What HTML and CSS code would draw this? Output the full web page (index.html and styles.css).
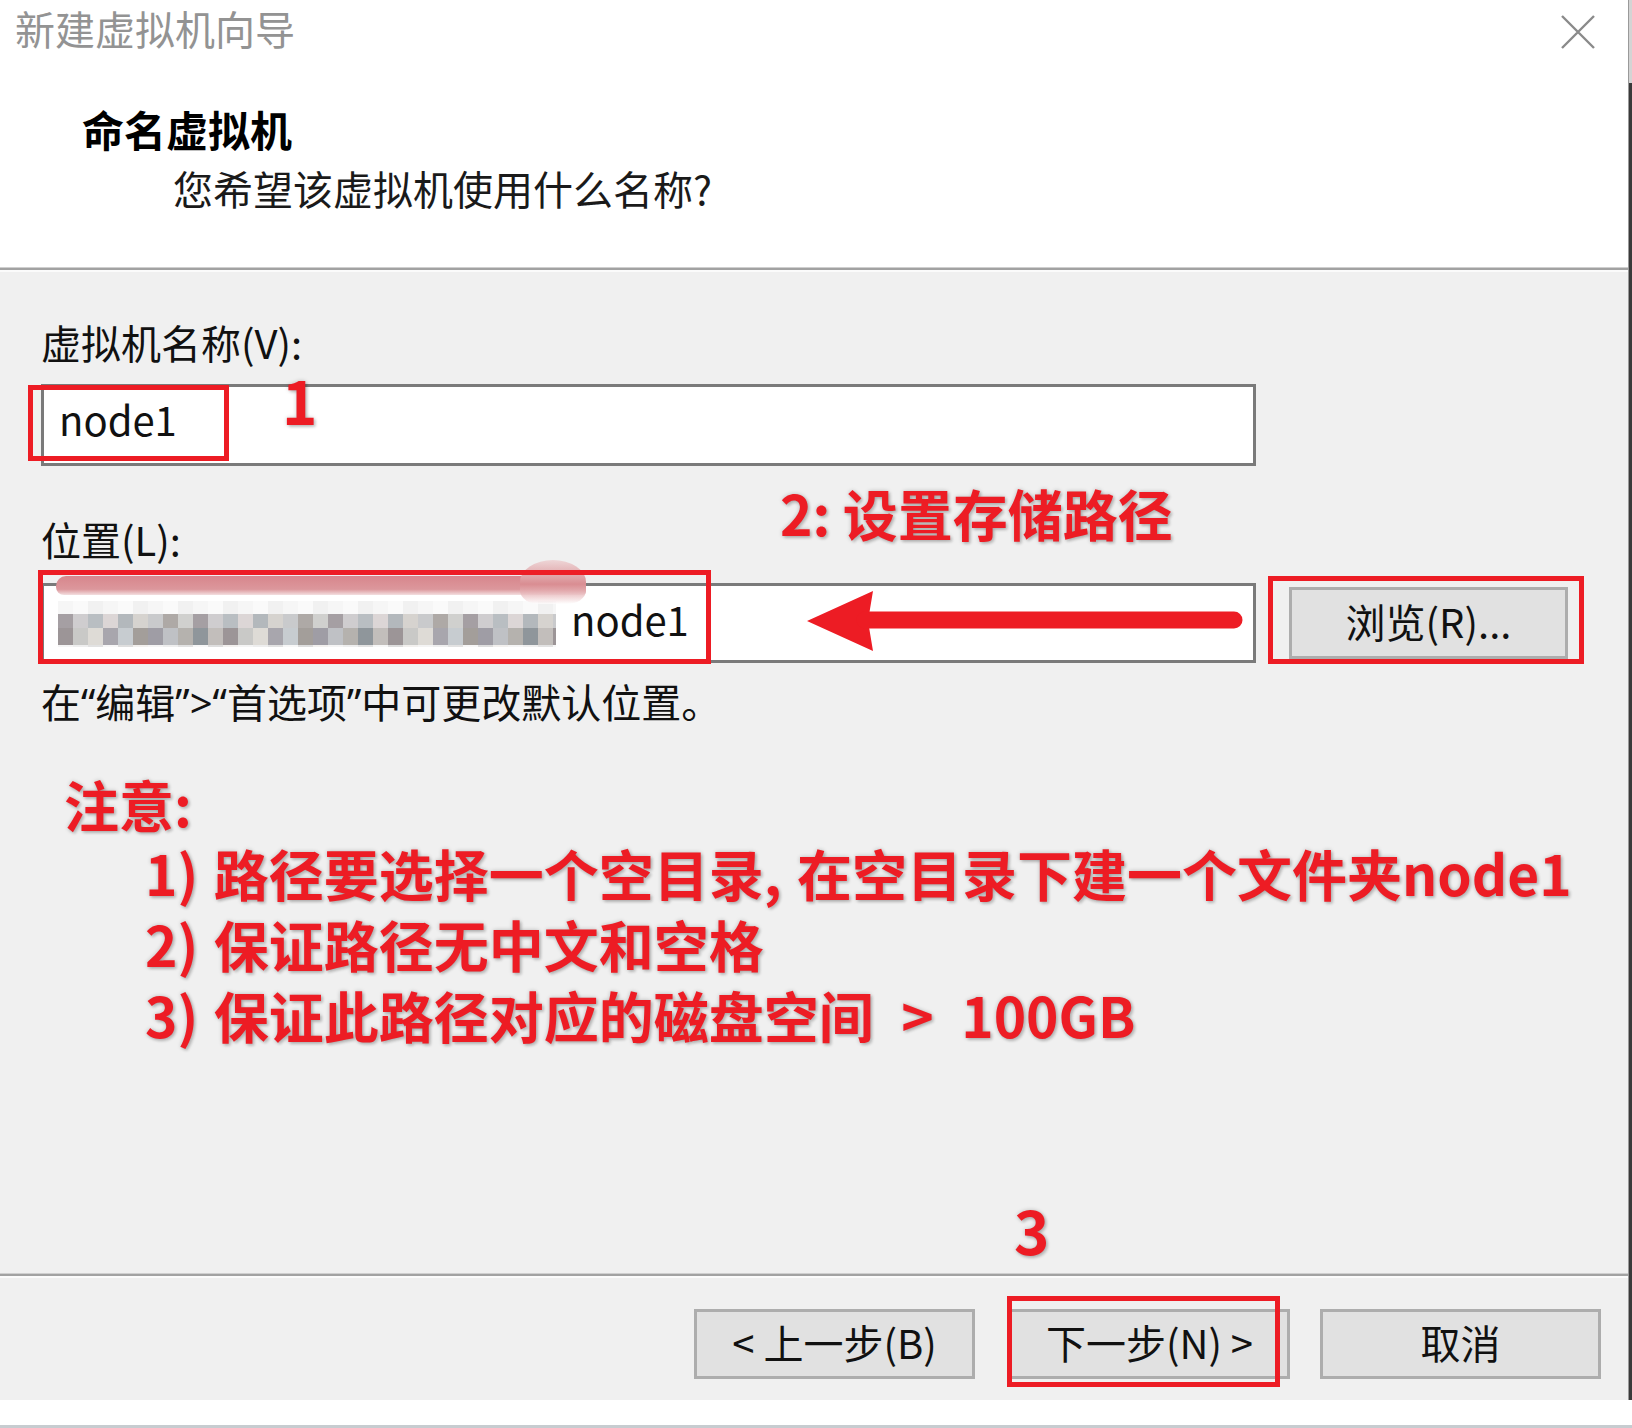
FILE: index.html
```html
<!DOCTYPE html>
<html lang="zh-CN">
<head>
    <meta charset="UTF-8">
    <title>新建虚拟机向导</title>
    <link rel="stylesheet" href="styles.css">
</head>
<body>
    <div class="window">
        <div class="dialog">
            <div class="header">
                <div class="titlebar">
                    <span class="title">新建虚拟机向导</span>
                    <svg class="close" width="36" height="34" viewBox="0 0 36 34">
                        <path d="M2 1 L34 33 M34 1 L2 33" stroke="#8a8a8a" stroke-width="2.4" fill="none"/>
                    </svg>
                </div>
                <h1 class="heading">命名虚拟机</h1>
                <p class="subtitle">您希望该虚拟机使用什么名称?</p>
            </div>
            <div class="rule"></div>

            <div class="content">
                <label class="label">虚拟机名称(V):</label>
                <div class="field name-field">node1</div>

                <label class="label loc-label">位置(L):</label>
                <div class="loc-row">
                    <div class="field loc-field">
                        <span class="mosaic"></span><span class="loc-text">node1</span>
                    </div>
                    <button class="btn browse-btn">浏览(R)...</button>
                </div>
                <p class="hint">在“编辑”&gt;“首选项”中可更改默认位置。</p>

                <div class="notes">
                    <div class="notes-title">注意:</div>
                    <ol class="notes-list">
                        <li>1) 路径要选择一个空目录, 在空目录下建一个文件夹node1</li>
                        <li>2) 保证路径无中文和空格</li>
                        <li>3) 保证此路径对应的磁盘空间&ensp;&gt;&ensp;100GB</li>
                    </ol>
                </div>
            </div>

            <div class="rule"></div>
            <div class="footer">
                <button class="btn">&lt; 上一步(B)</button>
                <button class="btn">下一步(N) &gt;</button>
                <button class="btn">取消</button>
            </div>
        </div>
        <div class="edge"></div>

        <!-- annotations drawn over the dialog -->
        <div class="smear"></div>
        <div class="smear-blob"></div>
        <div class="mark box-name"></div>
        <div class="mark box-loc"></div>
        <div class="mark box-browse"></div>
        <div class="mark box-next"></div>
        <span class="note-num num-1">1</span>
        <span class="note-step">2: 设置存储路径</span>
        <span class="note-num num-3">3</span>
        <svg class="arrow" width="436" height="60" viewBox="0 0 436 60">
            <polygon points="0,30 66,0 61,30 66,60" fill="#ed1c24"/>
            <line x1="58" y1="29" x2="427" y2="29" stroke="#ed1c24" stroke-width="17" stroke-linecap="round"/>
        </svg>
    </div>
    <div class="below"></div>
</body>
</html>
```

FILE: styles.css
```css
body {
    margin: 0;
    background-color: #fff;
    font-family: "Noto Sans CJK SC", "Noto Sans", sans-serif;
    color: #111;
}

.window {
    position: relative;
    display: flex;
    width: 1632px;
    height: 1400px;
}

.dialog {
    width: 1628px;
    display: flex;
    flex-direction: column;
    background-color: #f0f0f0;
}

.edge {
    width: 4px;
    background: linear-gradient(to bottom, #d4d4d4 0 83px, #3a3a3a 83px 100%);
    box-shadow: inset 1px 0 0 #9a9a9a;
}

/* header */
.header {
    background-color: #fff;
    height: 267px;
    box-sizing: border-box;
    padding-top: 4px;
}

.titlebar {
    display: flex;
    justify-content: space-between;
    align-items: flex-start;
    padding-left: 15px;
    padding-right: 32px;
}

.title {
    font-size: 40px;
    line-height: 48px;
    color: #939393;
}

.close {
    margin-top: 11px;
}

.heading {
    margin: 52px 0 0 82px;
    font-size: 42px;
    line-height: 50px;
    font-weight: bold;
    color: #000;
}

.subtitle {
    margin: 10px 0 0 173px;
    font-size: 40px;
    line-height: 48px;
    color: #1a1a1a;
}

.rule {
    height: 2px;
    background-color: #a2a2a2;
    border-top: 1px solid #cfcfcf;
    border-bottom: 2px solid #fbfbfb;
}

/* main area */
.content {
    flex: 1;
    padding: 46px 0 0 41px;
    font-size: 40px;
    line-height: 48px;
}

.label {
    display: block;
    color: #111;
}

.field {
    box-sizing: border-box;
    width: 1215px;
    height: 82px;
    margin-top: 18px;
    border: 3px solid #7a7a7a;
    background-color: #fff;
    padding-left: 15px;
    display: flex;
    align-items: center;
    padding-bottom: 12px;
}

.loc-label {
    margin-top: 49px;
}

.loc-row {
    display: flex;
    align-items: center;
    gap: 33px;
    margin-top: 20px;
}

.loc-row .field {
    margin-top: 0;
    height: 80px;
    padding-left: 14px;
    padding-bottom: 8px;
}

.mosaic {
    display: inline-block;
    width: 498px;
    height: 46px;
    margin-top: 10px;
    background-image:
        repeating-linear-gradient(90deg, #f6f6f6 0 15px, #fafafa 15px 30px, #f1f1f1 30px 45px),
        repeating-linear-gradient(90deg, #a59fa3 0 15px, #cfcdcf 15px 30px, #b9bec2 30px 45px, #dcd6d6 45px 60px, #b3b8bc 60px 75px, #d6d3cf 75px 90px, #c9cacc 90px 105px, #aea9a6 105px 120px, #d0d0ce 120px 135px),
        repeating-linear-gradient(90deg, #9c9597 0 15px, #c9c9c7 15px 30px, #dedbd6 30px 45px, #a8a6ad 45px 60px, #c7ccd0 60px 75px, #a39e9a 75px 90px, #9f9da5 90px 105px, #bfc1c5 105px 120px, #b5b2ae 120px 135px, #8f969b 135px 150px, #c2bebb 150px 165px),
        repeating-linear-gradient(90deg, #f4f4f4 0 15px, #eeeeee 15px 30px, #e2e2e2 30px 45px, #f7f7f7 45px 60px, #dedede 60px 75px, #f2f0ee 75px 90px);
    background-size: 100% 13px, 100% 14px, 100% 17px, 100% 15px;
    background-position: 0 0, 0 13px, 0 27px, 0 44px;
    background-repeat: no-repeat;
}

.loc-text {
    margin-left: 15px;
}

.btn {
    box-sizing: border-box;
    width: 281px;
    height: 70px;
    border: 3px solid #adadad;
    background-color: #e1e1e1;
    font-family: "Noto Sans CJK SC", "Noto Sans", sans-serif;
    font-size: 40px;
    line-height: 48px;
    color: #111;
    padding: 0 0 4px;
}

.browse-btn {
    width: 279px;
    height: 72px;
}

.hint {
    margin: 16px 0 0;
    font-family: "Noto Sans", "Noto Sans CJK SC", sans-serif;
}

/* red notes */
.notes {
    margin-top: 42px;
    padding-left: 23px;
    color: #ed1c24;
    font-size: 55px;
    font-weight: bold;
    line-height: 68px;
    text-shadow: 0 0 4px rgba(0, 0, 0, 0.22), 2px 2px 3px rgba(0, 0, 0, 0.18);
}

.notes-list {
    list-style: none;
    margin: 0;
    padding-left: 81px;
    line-height: 71px;
    word-spacing: 3px;
}

/* footer */
.footer {
    height: 122px;
    box-sizing: border-box;
    display: flex;
    justify-content: flex-end;
    gap: 30px;
    padding: 31px 27px 0 0;
}

.footer .btn:first-child {
    margin-right: 4px;
}

.below {
    height: 28px;
    background: linear-gradient(to bottom, #fff 0 25px, #c7ccd0 25px 28px);
}

/* annotations */
.mark {
    position: absolute;
    box-sizing: border-box;
    border: 5px solid #ed1c24;
}

.box-name { left: 28px; top: 385px; width: 201px; height: 76px; }
.box-loc { left: 38px; top: 570px; width: 673px; height: 94px; }
.box-browse { left: 1268px; top: 576px; width: 316px; height: 88px; }
.box-next { left: 1007px; top: 1296px; width: 273px; height: 91px; }

.smear {
    position: absolute;
    left: 56px;
    top: 576px;
    width: 530px;
    height: 19px;
    border-radius: 10px 10px 4px 8px;
    background: linear-gradient(to bottom, #d7868c, #dc979c 70%, #f3dfe0);
}

.smear-blob {
    position: absolute;
    left: 520px;
    top: 560px;
    width: 66px;
    height: 44px;
    border-radius: 50% 50% 30% 30%;
    background: linear-gradient(to bottom, #eed6d7, #d98d92 55%, rgba(255, 255, 255, 0.7));
}

.note-num,
.note-step {
    position: absolute;
    color: #ed1c24;
    font-weight: bold;
    text-shadow: 0 0 4px rgba(0, 0, 0, 0.22), 2px 2px 3px rgba(0, 0, 0, 0.18);
}

.note-num {
    font-size: 60px;
    line-height: 60px;
}

.num-1 { left: 282px; top: 369px; }
.num-3 { left: 1014px; top: 1199px; }

.note-step {
    left: 780px;
    top: 485px;
    font-size: 55px;
    line-height: 55px;
}

.arrow {
    position: absolute;
    left: 807px;
    top: 591px;
}
```
